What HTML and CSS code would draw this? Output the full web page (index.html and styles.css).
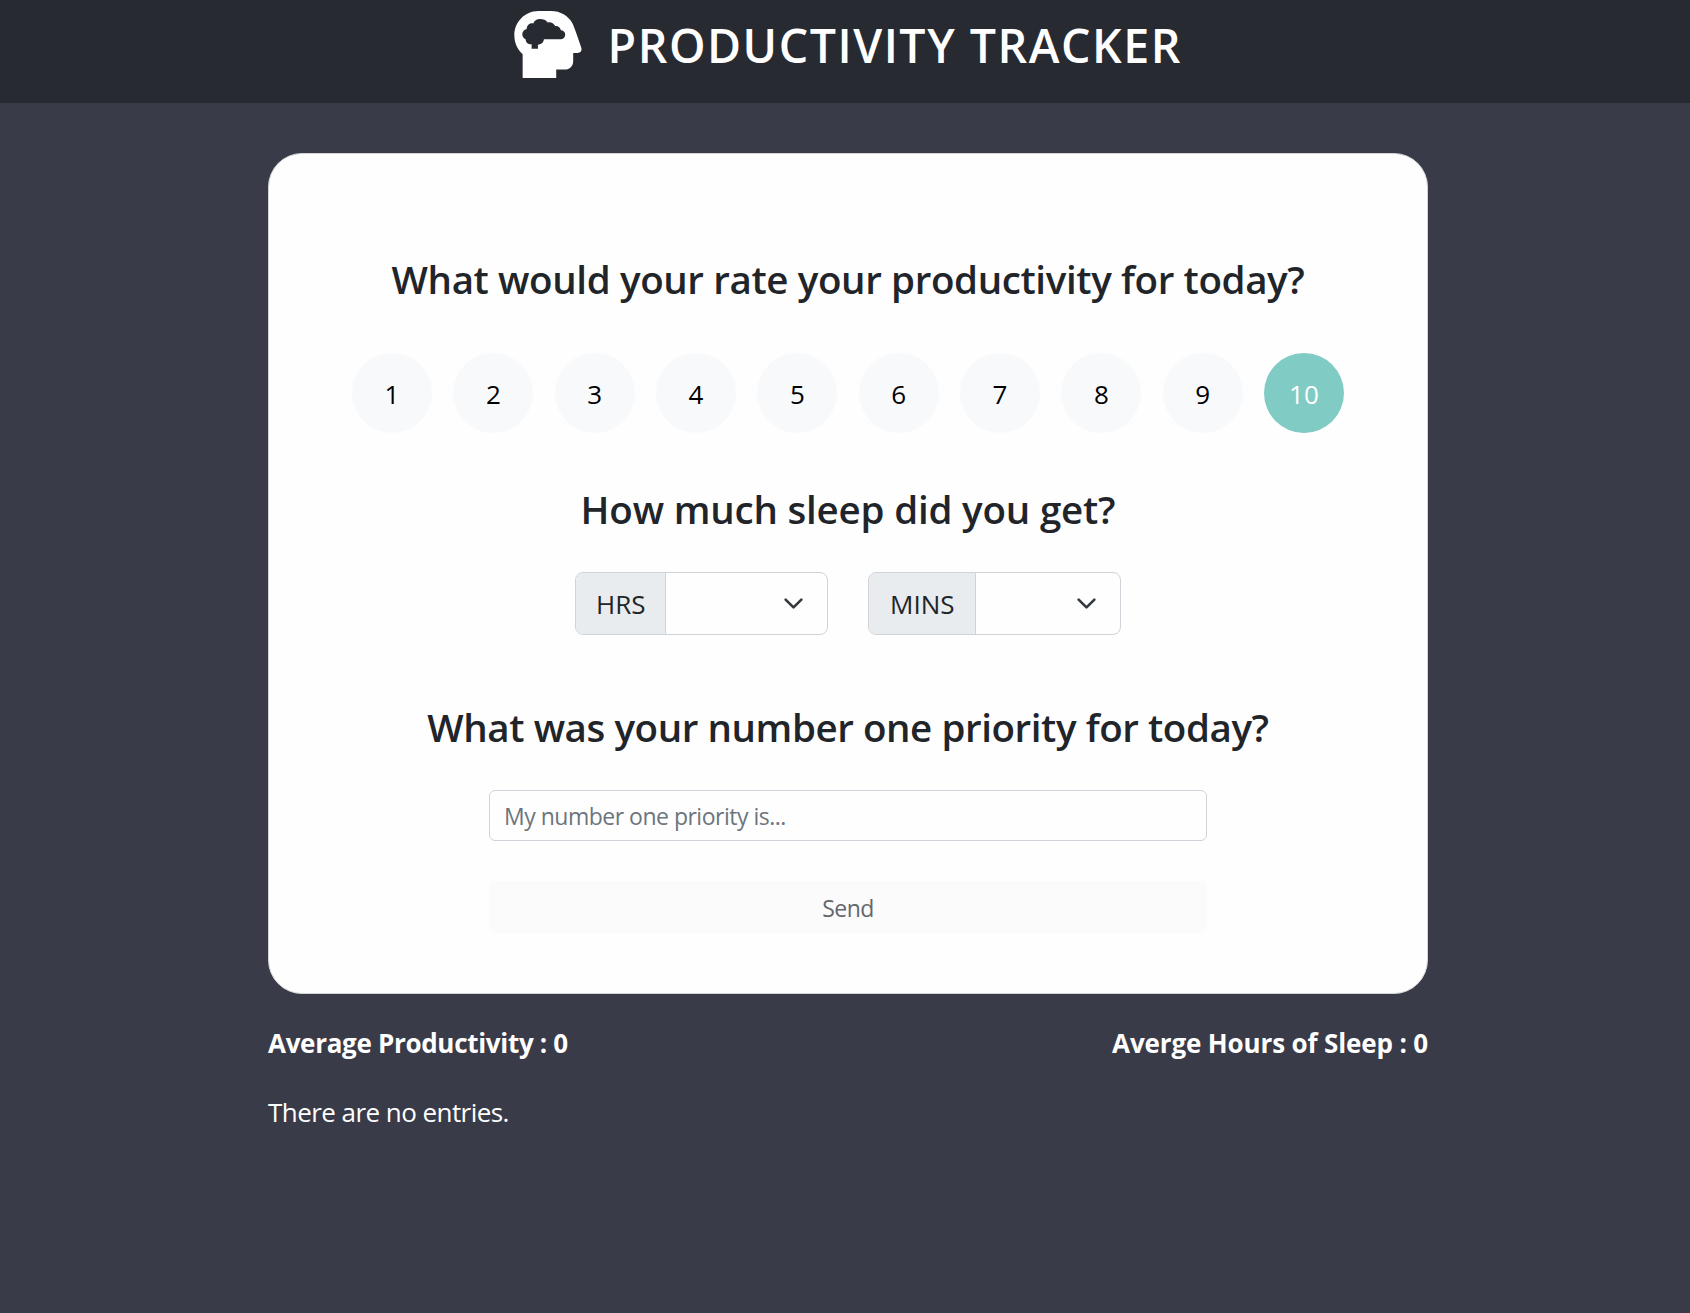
FILE: index.html
```html
<!DOCTYPE html>
<html lang="en">
<head>
<meta charset="utf-8">
<title>Productivity Tracker</title>
<link rel="stylesheet" href="styles.css">
</head>
<body>
<header class="header">
  <svg class="logo" viewBox="26 33 203 201" aria-hidden="true">
    <path fill="#fff" fill-rule="evenodd" d="M52 234V163C36 149 27 128 27 106C27 66 59 33 99 33H138C165 33 189 47 202 70Q207 79 229 145C230 154 226 159 217 159H204V184C204 199 193 209 179 209H153V234ZM79 146H98V134C107 134 115 128 116 118H166C174 118 180 112 180 104C180 96 174 91 167 91C165 82 159 77 150 78C145 69 137 65 127 67C122 60 114 57 104 57C94 57 87 62 84 70C73 69 65 75 64 87C56 89 51 95 51 103C51 110 55 116 61 118C61 128 69 134 79 133Z"/>
  </svg>
  <h1 class="title">PRODUCTIVITY TRACKER</h1>
</header>
<main class="page">
  <form class="card">
    <h2 class="question question-rate">What would your rate your productivity for today?</h2>
    <div class="ratings">
      <button type="button" class="rating">1</button>
      <button type="button" class="rating">2</button>
      <button type="button" class="rating">3</button>
      <button type="button" class="rating">4</button>
      <button type="button" class="rating">5</button>
      <button type="button" class="rating">6</button>
      <button type="button" class="rating">7</button>
      <button type="button" class="rating">8</button>
      <button type="button" class="rating">9</button>
      <button type="button" class="rating selected">10</button>
    </div>
    <h2 class="question question-sleep">How much sleep did you get?</h2>
    <div class="sleep">
      <div class="group">
        <div class="addon addon-hrs">HRS</div>
        <div class="select"><svg class="chevron" viewBox="0 0 16 16"><path d="m2 5 6 6 6-6"/></svg></div>
      </div>
      <div class="group">
        <div class="addon addon-mins">MINS</div>
        <div class="select"><svg class="chevron" viewBox="0 0 16 16"><path d="m2 5 6 6 6-6"/></svg></div>
      </div>
    </div>
    <h2 class="question question-priority">What was your number one priority for today?</h2>
    <input class="field" type="text" placeholder="My number one priority is..." aria-label="Number one priority">
    <button type="button" class="send">Send</button>
  </form>
  <div class="stats">
    <span class="avg-productivity">Average Productivity : 0</span>
    <span class="avg-sleep">Averge Hours of Sleep : 0</span>
  </div>
  <p class="empty">There are no entries.</p>
</main>
</body>
</html>
```

FILE: styles.css
```css
* { box-sizing: border-box; }
body {
  margin: 0;
  background: #3a3b48;
  color: #fff;
  font-family: "Open Sans", "Noto Sans", sans-serif;
}
h1, h2, p { margin: 0; }
button { border: 0; font: inherit; padding: 0; }
.header {
  height: 103px;
  padding: 11px 0 0 6px;
  display: flex;
  justify-content: center;
  align-items: flex-start;
  gap: 26px;
  background: #282a32;
}
.logo { width: 67.5px; height: 67px; }
.title {
  font-size: 46.5px;
  font-weight: 600;
  line-height: 68px;
  letter-spacing: 1.52px;
  white-space: nowrap;
}
.page { width: 1160px; margin: 50px 0 0 268px; }
.card {
  height: 841px;
  border: 1px solid #d2d3d6;
  border-radius: 34px;
  background: #fefefe;
  color: #212529;
  display: flex;
  flex-direction: column;
  align-items: center;
  padding-top: 101px;
}
.question { font-size: 38.5px; font-weight: 600; line-height: 48px; white-space: nowrap; }
.question-rate { letter-spacing: -0.37px; }
.ratings { display: flex; gap: 21.33px; margin-top: 50px; }
.rating {
  width: 80px;
  height: 80px;
  padding-top: 2px;
  border-radius: 50%;
  background: #f8f9fb;
  color: #000;
  font-size: 26px;
  line-height: 78px;
}
.rating.selected { background: #80cbc4; color: #fff; }
.question-sleep { margin-top: 52px; letter-spacing: -0.19px; }
.sleep { display: flex; gap: 40px; margin-top: 39px; }
.group {
  display: flex;
  width: 253px;
  height: 63px;
  border: 1px solid #ced4da;
  border-radius: 8px;
  overflow: hidden;
}
.addon {
  background: #e9ecef;
  border-right: 1px solid #ced4da;
  font-size: 26px;
  line-height: 63px;
}
.addon-hrs { width: 90px; padding-left: 20px; }
.addon-mins { width: 107px; padding-left: 21px; }
.select {
  flex: 1;
  display: flex;
  align-items: center;
  justify-content: flex-end;
  padding-right: 23px;
}
.chevron {
  width: 21px;
  height: 21px;
  fill: none;
  stroke: #343a40;
  stroke-width: 2;
  stroke-linecap: round;
  stroke-linejoin: round;
}
.question-priority { margin-top: 68px; letter-spacing: -0.42px; }
.field {
  width: 718px;
  height: 51px;
  margin-top: 39px;
  padding: 0 14px;
  border: 1px solid #ced4da;
  border-radius: 6px;
  background: #fefefe;
  color: #212529;
  font: 23px "Open Sans", "Noto Sans", sans-serif;
  letter-spacing: -0.5px;
}
.field::placeholder { color: #6c757d; opacity: 1; }
.send {
  width: 718px;
  height: 52px;
  margin-top: 40px;
  padding-top: 2px;
  border-radius: 6px;
  background: #fbfbfb;
  color: #65666c;
  font-size: 23px;
  line-height: 50px;
  letter-spacing: -0.6px;
}
.stats {
  display: flex;
  justify-content: space-between;
  margin-top: 29px;
  font-size: 26px;
  line-height: 40px;
  font-weight: 700;
  white-space: nowrap;
}
.avg-productivity { letter-spacing: -0.31px; }
.avg-sleep { letter-spacing: -0.14px; }
.empty {
  margin-top: 29px;
  font-size: 26px;
  line-height: 40px;
  letter-spacing: -0.55px;
}
```
